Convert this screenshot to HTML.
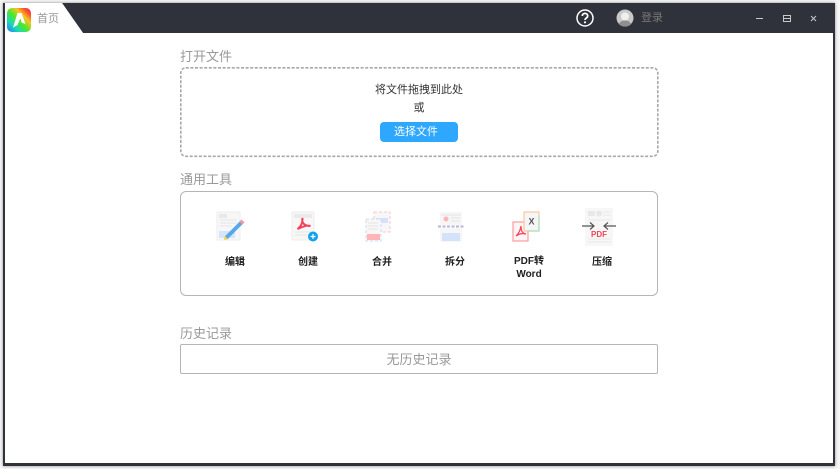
<!DOCTYPE html>
<html lang="zh"><head><meta charset="utf-8"><style>
*{box-sizing:border-box;margin:0;padding:0}
html,body{width:840px;height:469px;overflow:hidden;background:#f6f6f7;font-family:"Liberation Sans","Noto Sans CJK SC",sans-serif}
.a{position:absolute;white-space:nowrap}
#win{left:3px;top:3px;width:832px;height:463px;background:#fff;border:2px solid #2f323b;border-top:0;border-bottom-width:3px;box-shadow:0 0 3px #888}
.h{font-size:13px;color:#999;line-height:18px;left:180px}
.t{font-size:10px;font-weight:bold;color:#222;text-align:center;width:60px;line-height:13px}
svg{position:absolute;overflow:visible}
</style></head><body>
<div class="a" id="win"></div>
<svg style="left:0;top:0" width="840" height="34"><polygon points="5,3 835,3 835,33 83,33 62,3" fill="#2f323b"/><polygon points="5,3 62,3 83,33 5,33" fill="#fff"/></svg>
<svg style="left:7px;top:8px" width="24" height="24" viewBox="0 0 24 24">
<defs><linearGradient id="g" x1="0" y1="1" x2="1" y2="0"><stop offset="0" stop-color="#2a6fff"/><stop offset=".25" stop-color="#18d8c0"/><stop offset=".48" stop-color="#4de82a"/><stop offset=".68" stop-color="#f7c520"/><stop offset=".85" stop-color="#ff4a30"/><stop offset="1" stop-color="#f02a50"/></linearGradient></defs>
<rect width="24" height="24" rx="5" fill="url(#g)"/><path d="M6 19.500 10.500 5h4L18.500 16l-4-1.500-.8-3.500h-.7L10.500 17z" fill="#fff"/></svg>
<div class="a" style="left:37px;top:12px;font-size:11px;line-height:15px;color:#999">首页</div>
<svg style="left:576px;top:9px" width="18" height="18" viewBox="0 0 18 18"><circle cx="9" cy="9" r="8" fill="none" stroke="#fff" stroke-width="1.500"/><path d="M6.300 7c0-3.500 5.400-3.500 5.400 0 0 2-2.700 2-2.700 4" fill="none" stroke="#fff" stroke-width="1.800"/><circle cx="9" cy="13.300" r="1.100" fill="#fff"/></svg>
<svg style="left:616px;top:9px" width="18" height="18" viewBox="0 0 18 18"><circle cx="9" cy="9" r="8.500" fill="#c9c9c9"/><circle cx="9" cy="7.500" r="4" fill="#efefef"/><path d="M3 15.200c1-3 3.500-3.700 6-3.700s5 .7 6 3.700A8.500 8.500 0 0 1 3 15.200z" fill="#8f8f8f"/></svg>
<div class="a" style="left:641px;top:11px;font-size:11px;line-height:15px;color:#777">登录</div>
<svg style="left:750px;top:10px" width="70" height="16" viewBox="0 0 70 16" fill="none" stroke="#c8c8c8"><path d="M6 8.500h7"/><rect x="33.500" y="5.500" width="7" height="6"/><path d="M33.500 8.500h7"/><path d="M61 6l5 5M66 6l-5 5"/></svg>
<div class="a h" style="top:48px">打开文件</div>
<svg style="left:180px;top:67px" width="479" height="90"><rect x=".8" y=".8" width="477" height="88.500" rx="5" fill="none" stroke="#a8a8a8" stroke-width="1.600" stroke-dasharray="3 1.600"/></svg>
<div class="a" style="left:180px;width:478px;top:82px;text-align:center;font-size:11px;line-height:17px;color:#333">将文件拖拽到此处</div>
<div class="a" style="left:180px;width:478px;top:100px;text-align:center;font-size:11px;line-height:17px;color:#333">或</div>
<div class="a" style="left:380px;top:122px;width:78px;height:20px;background:#2ea7ff;border-radius:4px;color:#fff;font-size:11px;line-height:20px;text-align:center;padding-right:6px">选择文件</div>
<div class="a h" style="top:171px">通用工具</div>
<div class="a" style="left:180px;top:191px;width:478px;height:105px;border:1px solid #b5b5b5;border-radius:6px"></div>

<svg style="left:217px;top:212px" width="30" height="30" viewBox="0 0 30 30"><rect x="0" y="0" width="23" height="28" fill="#f7f7f7" stroke="#eee"/><path d="M3 8h17M3 11h17M3 14h12" stroke="#e6e6e6"/><rect x="2" y="2" width="8" height="4" fill="#e8e8e8"/><rect x="2" y="19" width="16" height="7" fill="#d5e6fb"/><path d="M9 26l16-16" stroke="#5aa8ec" stroke-width="4"/><path d="M23.500 8.500l3 3" stroke="#f09aa5" stroke-width="3"/><path d="M7 28l4-1-3-3z" fill="#f5d033"/></svg>
<div class="a t" style="left:205px;top:256px">编辑</div>

<svg style="left:292px;top:212px" width="30" height="30" viewBox="0 0 30 30"><rect x="0" y="0" width="22" height="28" fill="#f7f7f7" stroke="#eee"/><rect x="2" y="2" width="18" height="4" fill="#eaeaea"/><path d="M3 20h16M3 23h12" stroke="#e4e4e4"/><path d="M10.500 6c-1 4 1 8 8 8-4-1-6 0-13 3 4-3 5-6 5-11z" fill="none" stroke="#f0445a" stroke-width="2"/><circle cx="21" cy="24.500" r="5" fill="#12a0f0"/><path d="M18.500 24.500h5M21 22v5" stroke="#fff" stroke-width="1.200"/></svg>
<div class="a t" style="left:278px;top:256px">创建</div>

<svg style="left:365px;top:211px" width="28" height="32" viewBox="0 0 28 32"><rect x="9" y="1" width="16" height="20" fill="#f7f7f7" stroke="#f9c8c8" stroke-dasharray="3 2"/><rect x="11" y="7" width="12" height="5" fill="#d5e3fa"/><rect x="1" y="8" width="15" height="22" fill="#f7f7f7" stroke="#c5dcf5" stroke-dasharray="3 2"/><path d="M3 12h10M3 15h10M3 18h10" stroke="#e4e4e4"/><rect x="2" y="23" width="13" height="6" fill="#ffb5b8"/></svg>
<div class="a t" style="left:352px;top:256px">合并</div>

<svg style="left:438px;top:211px" width="28" height="32" viewBox="0 0 28 32"><rect x="2" y="1" width="22" height="13" fill="#f6f6f6"/><circle cx="8" cy="8" r="2.500" fill="#ffb5b5"/><path d="M3 4h20M13 7h9M13 10h9" stroke="#e4e4e4"/><path d="M0 15.500h26" stroke="#b5b5d8" stroke-width="2" stroke-dasharray="3 1.500"/><rect x="2" y="17" width="22" height="14" fill="#f6f6f6"/><rect x="4" y="22" width="18" height="8" fill="#d5e3fa"/></svg>
<div class="a t" style="left:425px;top:256px">拆分</div>

<svg style="left:512px;top:211px" width="30" height="32" viewBox="0 0 30 32"><rect x="1" y="11" width="15" height="19" fill="#fdf5f5" stroke="#ff9a9f" stroke-width="1.200"/><path d="M9 15c0 5 1 7 5 8-5-1-7 0-10 2 3-3 4-5 5-10z" fill="none" stroke="#f0445a" stroke-width="1.200"/><rect x="12" y="1" width="15" height="19" fill="#f6f6f6" stroke="#f7c9a0" stroke-width="1.200"/><path d="M27 5v15H16" fill="none" stroke="#a8e0c0" stroke-width="1.200"/><text x="19.500" y="13.500" text-anchor="middle" font-size="9" font-weight="bold" fill="#555" font-family="Liberation Sans">X</text></svg>
<div class="a t" style="left:499px;top:255px">PDF转<br>Word</div>

<svg style="left:582px;top:207px" width="34" height="40" viewBox="0 0 34 40"><rect x="3" y="1" width="28" height="38" fill="#f7f7f7"/><rect x="6" y="4" width="7" height="5" fill="#e8e8e8"/><circle cx="17" cy="6.500" r="3" fill="#e8e8e8"/><path d="M21 5h8M21 8h8M6 13h23M6 32h23M6 35h23" stroke="#e8e8e8"/><path d="M0 19h12M8 15.500l4 3.500-4 3.500M34 19H22M26 15.500L22 19l4 3.500" fill="none" stroke="#555" stroke-width="1.200"/><text x="17" y="30" text-anchor="middle" font-size="8" font-weight="bold" fill="#f0445a" font-family="Liberation Sans">PDF</text></svg>
<div class="a t" style="left:572px;top:256px">压缩</div>

<div class="a h" style="top:325px">历史记录</div>
<div class="a" style="left:180px;top:344px;width:478px;height:30px;border:1px solid #b5b5b5;border-radius:2px;text-align:center;font-size:13px;line-height:29px;color:#999">无历史记录</div>
</body></html>
